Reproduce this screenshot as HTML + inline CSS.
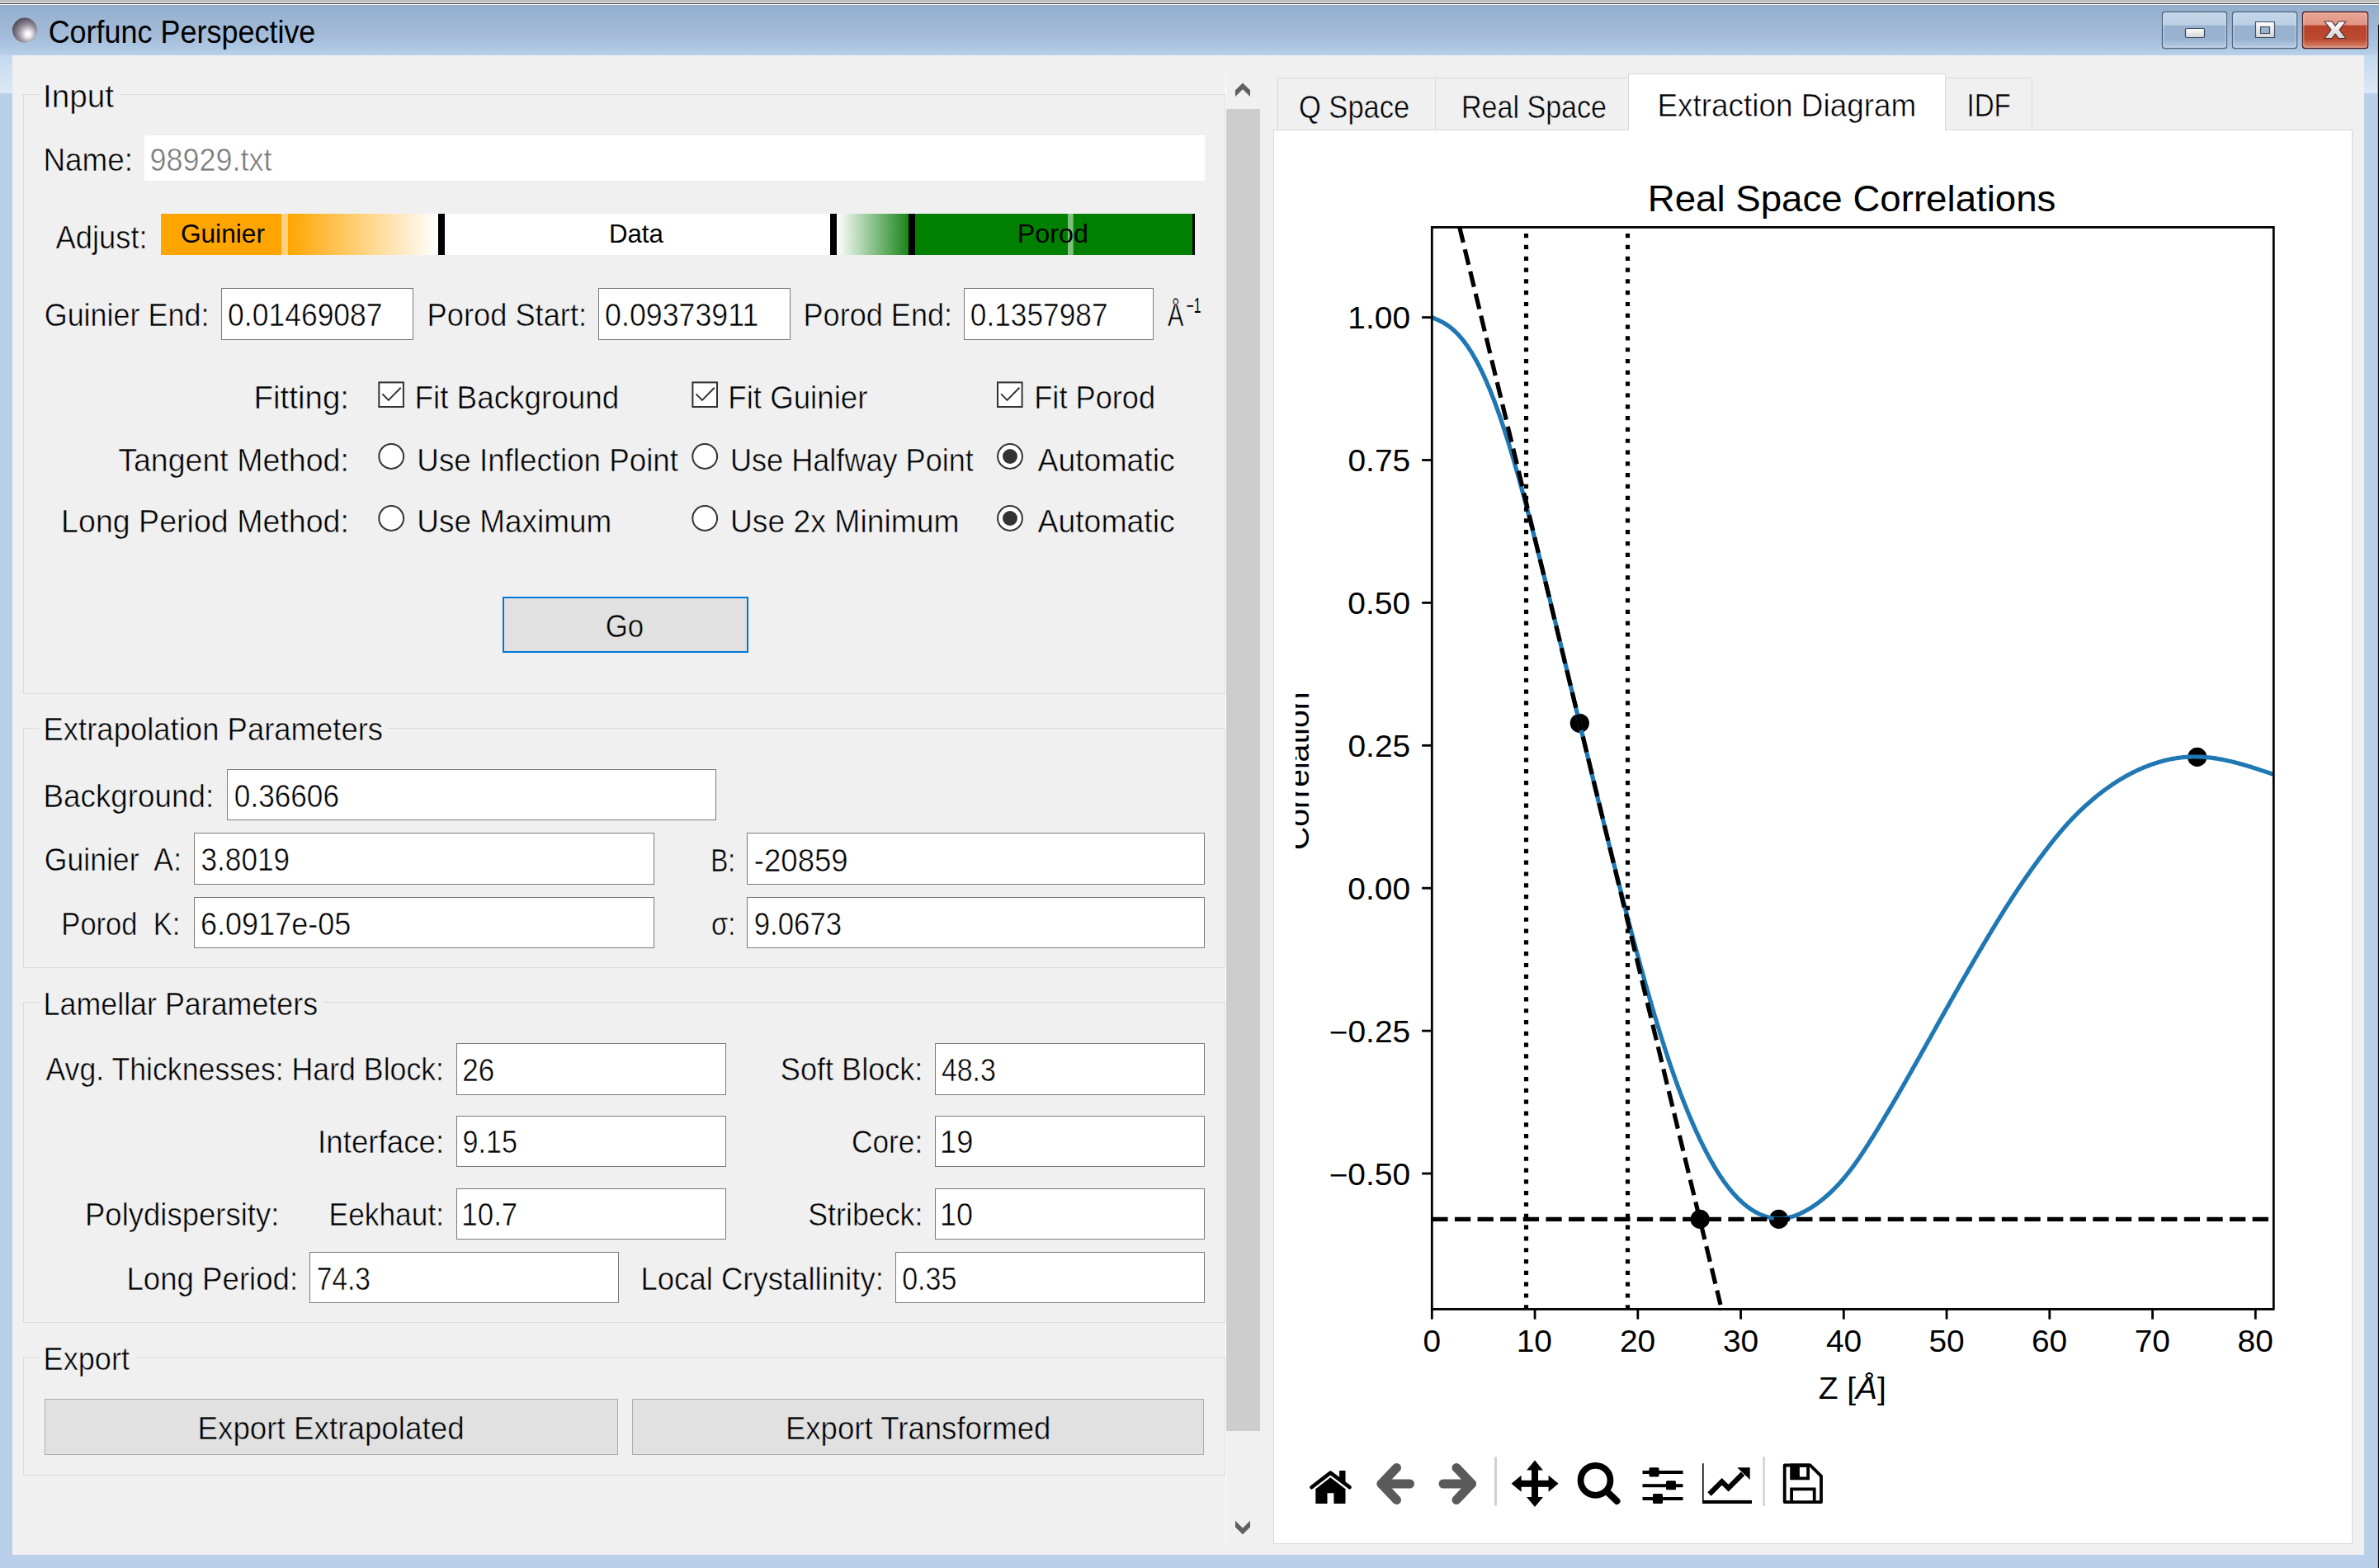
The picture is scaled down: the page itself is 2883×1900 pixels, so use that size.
<!DOCTYPE html><html><head><meta charset="utf-8"><style>html,body{margin:0;padding:0;background:#f0f0f0;}svg{display:block;}text{font-family:"Liberation Sans",sans-serif;white-space:pre;}</style></head><body><svg width="2883" height="1900" viewBox="0 0 2883 1900"><defs><linearGradient id="gTitle" x1="0" y1="0" x2="0" y2="1"><stop offset="0" stop-color="#93afce"/><stop offset="0.55" stop-color="#a2bad7"/><stop offset="0.8" stop-color="#abc4e1"/><stop offset="1" stop-color="#b9d1ea"/></linearGradient><linearGradient id="gSideTop" x1="0" y1="0" x2="0" y2="1"><stop offset="0" stop-color="#c5d9ee"/><stop offset="1" stop-color="#dce8f5"/></linearGradient><radialGradient id="gBall" cx="0.62" cy="0.64" r="0.8" fx="0.63" fy="0.66"><stop offset="0" stop-color="#ffffff"/><stop offset="0.12" stop-color="#f8f4f8"/><stop offset="0.45" stop-color="#9a94a0"/><stop offset="0.8" stop-color="#56515f"/><stop offset="1" stop-color="#423d4c"/></radialGradient><linearGradient id="gBtn" x1="0" y1="0" x2="0" y2="1"><stop offset="0" stop-color="#c3d6ea"/><stop offset="0.36" stop-color="#bcd0e6"/><stop offset="0.37" stop-color="#98b2cf"/><stop offset="0.75" stop-color="#98b2d0"/><stop offset="1" stop-color="#b9cfe6"/></linearGradient><linearGradient id="gClose" x1="0" y1="0" x2="0" y2="1"><stop offset="0" stop-color="#e9a593"/><stop offset="0.36" stop-color="#e19584"/><stop offset="0.37" stop-color="#b8412a"/><stop offset="0.75" stop-color="#bb4a2f"/><stop offset="1" stop-color="#dc8a74"/></linearGradient><linearGradient id="gGlyph" x1="0" y1="0" x2="0" y2="1"><stop offset="0" stop-color="#ffffff"/><stop offset="1" stop-color="#d4d4d4"/></linearGradient><linearGradient id="gOrange" x1="0" y1="0" x2="1" y2="0"><stop offset="0" stop-color="#ffa500"/><stop offset="1" stop-color="#ffffff"/></linearGradient><linearGradient id="gGreen" x1="0" y1="0" x2="1" y2="0"><stop offset="0" stop-color="#ffffff"/><stop offset="1" stop-color="#1a851a"/></linearGradient><clipPath id="cCanvas"><rect x="1570" y="158" width="1280" height="1712"/></clipPath></defs>
<rect x="0.00" y="0.00" width="2883.00" height="1900.00" fill="#bad0ea" />
<rect x="0.00" y="0.00" width="2883.00" height="3.00" fill="#bebebe" />
<rect x="0.00" y="3.00" width="2883.00" height="1.00" fill="#f2f2f2" />
<rect x="0.00" y="4.00" width="2883.00" height="1.00" fill="#3a3a3a" />
<rect x="0.00" y="5.00" width="2883.00" height="1.00" fill="#ffffff" />
<rect x="0.00" y="6.00" width="2883.00" height="61.00" fill="url(#gTitle)" />
<rect x="0.00" y="67.00" width="15.00" height="46.00" fill="url(#gSideTop)" />
<rect x="2865.00" y="67.00" width="17.00" height="46.00" fill="url(#gSideTop)" />
<rect x="2881.00" y="30.00" width="1.00" height="1870.00" fill="#58d0f8" />
<rect x="2882.00" y="30.00" width="1.00" height="1870.00" fill="#000000" />
<circle cx="30" cy="36.6" r="15" fill="url(#gBall)"/>
<text x="58.67" y="52.00" font-size="38" fill="#000" textLength="323.71" lengthAdjust="spacingAndGlyphs" >Corfunc Perspective</text>
<rect x="2620.5" y="14.5" width="78" height="44" rx="3" ry="3" fill="url(#gBtn)" stroke="#4f6580" stroke-width="1.3"/>
<rect x="2621.8" y="15.8" width="75.4" height="41.4" rx="2" ry="2" fill="none" stroke="#ffffff" stroke-opacity="0.45" stroke-width="1"/>
<rect x="2705.5" y="14.5" width="78" height="44" rx="3" ry="3" fill="url(#gBtn)" stroke="#4f6580" stroke-width="1.3"/>
<rect x="2706.8" y="15.8" width="75.4" height="41.4" rx="2" ry="2" fill="none" stroke="#ffffff" stroke-opacity="0.45" stroke-width="1"/>
<rect x="2790.5" y="14.5" width="79" height="44" rx="3" ry="3" fill="url(#gClose)" stroke="#4b1510" stroke-width="1.3"/>
<rect x="2791.8" y="15.8" width="76.4" height="41.4" rx="2" ry="2" fill="none" stroke="#ffffff" stroke-opacity="0.45" stroke-width="1"/>
<rect x="2648.5" y="34.5" width="23" height="11" rx="1.5" fill="url(#gGlyph)" stroke="#3a4a60" stroke-width="1.2"/>
<path d="M2733.5,26.5 h23 v19 h-23 z M2739.5,32.5 v8 h11 v-8 z" fill="url(#gGlyph)" fill-rule="evenodd" stroke="#3a4a60" stroke-width="1.2"/>
<path d="M2817,26 L2826,26 L2830,31.5 L2834,26 L2843,26 L2835,36 L2843,46.5 L2834,46.5 L2830,41 L2826,46.5 L2817,46.5 L2825,36 Z" fill="url(#gGlyph)" stroke="#4a2a2a" stroke-width="1.2" stroke-linejoin="round"/>
<rect x="15.00" y="67.00" width="2850.00" height="1817.00" fill="#f0f0f0" />
<rect x="28.00" y="114.00" width="20.00" height="1.00" fill="#dcdcdc" />
<rect x="145.00" y="114.00" width="1340.00" height="1.00" fill="#dcdcdc" />
<rect x="28.00" y="114.00" width="1.00" height="727.00" fill="#dcdcdc" />
<rect x="1484.00" y="114.00" width="1.00" height="727.00" fill="#dcdcdc" />
<rect x="28.00" y="840.00" width="1457.00" height="1.00" fill="#dcdcdc" />
<rect x="28.00" y="882.00" width="20.00" height="1.00" fill="#dcdcdc" />
<rect x="470.00" y="882.00" width="1015.00" height="1.00" fill="#dcdcdc" />
<rect x="28.00" y="882.00" width="1.00" height="291.00" fill="#dcdcdc" />
<rect x="1484.00" y="882.00" width="1.00" height="291.00" fill="#dcdcdc" />
<rect x="28.00" y="1172.00" width="1457.00" height="1.00" fill="#dcdcdc" />
<rect x="28.00" y="1214.00" width="20.00" height="1.00" fill="#dcdcdc" />
<rect x="391.00" y="1214.00" width="1094.00" height="1.00" fill="#dcdcdc" />
<rect x="28.00" y="1214.00" width="1.00" height="389.00" fill="#dcdcdc" />
<rect x="1484.00" y="1214.00" width="1.00" height="389.00" fill="#dcdcdc" />
<rect x="28.00" y="1602.00" width="1457.00" height="1.00" fill="#dcdcdc" />
<rect x="28.00" y="1644.00" width="20.00" height="1.00" fill="#dcdcdc" />
<rect x="164.00" y="1644.00" width="1321.00" height="1.00" fill="#dcdcdc" />
<rect x="28.00" y="1644.00" width="1.00" height="144.00" fill="#dcdcdc" />
<rect x="1484.00" y="1644.00" width="1.00" height="144.00" fill="#dcdcdc" />
<rect x="28.00" y="1787.00" width="1457.00" height="1.00" fill="#dcdcdc" />
<rect x="1485.00" y="89.00" width="1.00" height="1783.00" fill="#ffffff" />
<text x="51.94" y="130.40" font-size="38.5" fill="#000" textLength="86.14" lengthAdjust="spacingAndGlyphs" stroke="#f0f0f0" stroke-width="0.55" >Input</text>
<text x="52.51" y="896.70" font-size="38.5" fill="#000" textLength="411.61" lengthAdjust="spacingAndGlyphs" stroke="#f0f0f0" stroke-width="0.55" >Extrapolation Parameters</text>
<text x="52.56" y="1229.70" font-size="38.5" fill="#000" textLength="332.54" lengthAdjust="spacingAndGlyphs" stroke="#f0f0f0" stroke-width="0.55" >Lamellar Parameters</text>
<text x="52.53" y="1660.20" font-size="38.5" fill="#000" textLength="104.52" lengthAdjust="spacingAndGlyphs" stroke="#f0f0f0" stroke-width="0.55" >Export</text>
<text x="52.47" y="207.00" font-size="38.5" fill="#000" textLength="108.66" lengthAdjust="spacingAndGlyphs" stroke="#f0f0f0" stroke-width="0.55" >Name:</text>
<rect x="175.00" y="164.00" width="1285.00" height="55.00" fill="#ffffff" />
<text x="181.41" y="207.00" font-size="38.5" fill="#787878" textLength="148.05" lengthAdjust="spacingAndGlyphs" stroke="#ffffff" stroke-width="0.55" >98929.txt</text>
<text x="67.43" y="300.70" font-size="38.5" fill="#000" textLength="111.19" lengthAdjust="spacingAndGlyphs" stroke="#f0f0f0" stroke-width="0.55" >Adjust:</text>
<rect x="195.00" y="259.00" width="1253.00" height="50.00" fill="#ffffff" />
<rect x="195.00" y="259.00" width="146.00" height="50.00" fill="#ffa500" />
<rect x="341.00" y="259.00" width="8.00" height="50.00" fill="#ffd07f" />
<rect x="349.00" y="259.00" width="182.00" height="50.00" fill="url(#gOrange)" />
<rect x="531.00" y="259.00" width="8.00" height="50.00" fill="#000000" />
<rect x="1006.00" y="259.00" width="8.00" height="50.00" fill="#000000" />
<rect x="1014.00" y="259.00" width="87.00" height="50.00" fill="url(#gGreen)" />
<rect x="1101.00" y="259.00" width="8.00" height="50.00" fill="#000000" />
<rect x="1109.00" y="259.00" width="336.00" height="50.00" fill="#008000" />
<rect x="1294.00" y="259.00" width="6.70" height="50.00" fill="#80bf80" />
<rect x="1445.00" y="259.00" width="3.00" height="50.00" fill="#000000" />
<text x="218.92" y="294.00" font-size="32" fill="#000" textLength="102.01" lengthAdjust="spacingAndGlyphs" >Guinier</text>
<text x="737.94" y="294.00" font-size="32" fill="#000" textLength="65.87" lengthAdjust="spacingAndGlyphs" >Data</text>
<text x="1232.86" y="294.00" font-size="32" fill="#000" textLength="86.02" lengthAdjust="spacingAndGlyphs" >Porod</text>
<text x="53.70" y="395.00" font-size="38.5" fill="#000" textLength="199.75" lengthAdjust="spacingAndGlyphs" stroke="#f0f0f0" stroke-width="0.55" >Guinier End:</text>
<rect x="268.00" y="349.00" width="233.00" height="63.00" fill="#7a7a7a" />
<rect x="269.00" y="350.00" width="231.00" height="61.00" fill="#ffffff" />
<text x="276.12" y="395.00" font-size="38.5" fill="#000" textLength="187.47" lengthAdjust="spacingAndGlyphs" stroke="#ffffff" stroke-width="0.55" >0.01469087</text>
<text x="517.53" y="395.00" font-size="38.5" fill="#000" textLength="193.57" lengthAdjust="spacingAndGlyphs" stroke="#f0f0f0" stroke-width="0.55" >Porod Start:</text>
<rect x="725.00" y="349.00" width="233.00" height="63.00" fill="#7a7a7a" />
<rect x="726.00" y="350.00" width="231.00" height="61.00" fill="#ffffff" />
<text x="733.11" y="395.00" font-size="38.5" fill="#000" textLength="186.15" lengthAdjust="spacingAndGlyphs" stroke="#ffffff" stroke-width="0.55" >0.09373911</text>
<text x="973.54" y="395.00" font-size="38.5" fill="#000" textLength="180.52" lengthAdjust="spacingAndGlyphs" stroke="#f0f0f0" stroke-width="0.55" >Porod End:</text>
<rect x="1168.00" y="349.00" width="230.00" height="63.00" fill="#7a7a7a" />
<rect x="1169.00" y="350.00" width="228.00" height="61.00" fill="#ffffff" />
<text x="1175.82" y="395.00" font-size="38.5" fill="#000" textLength="166.74" lengthAdjust="spacingAndGlyphs" stroke="#ffffff" stroke-width="0.55" >0.1357987</text>
<text x="1414.94" y="395.00" font-size="38.5" fill="#000" textLength="19.42" lengthAdjust="spacingAndGlyphs" stroke="#f0f0f0" stroke-width="0.55" >Å</text>
<text x="1437.73" y="379.00" font-size="25" fill="#000" textLength="17.84" lengthAdjust="spacingAndGlyphs" >−1</text>
<text x="307.46" y="495.00" font-size="38.5" fill="#000" textLength="115.54" lengthAdjust="spacingAndGlyphs" stroke="#f0f0f0" stroke-width="0.55" >Fitting:</text>
<text x="143.17" y="570.80" font-size="38.5" fill="#000" textLength="279.73" lengthAdjust="spacingAndGlyphs" stroke="#f0f0f0" stroke-width="0.55" >Tangent Method:</text>
<text x="74.12" y="645.20" font-size="38.5" fill="#000" textLength="348.81" lengthAdjust="spacingAndGlyphs" stroke="#f0f0f0" stroke-width="0.55" >Long Period Method:</text>
<rect x="459.3" y="463.4" width="29.6" height="29.6" fill="#ffffff" stroke="#333333" stroke-width="2"/>
<path d="M463.40000000000003,477.4 L470.8,484.9 L485.7,469.7" fill="none" stroke="#333333" stroke-width="2"/>
<rect x="839.4" y="463.4" width="29.6" height="29.6" fill="#ffffff" stroke="#333333" stroke-width="2"/>
<path d="M843.5,477.4 L850.9,484.9 L865.8,469.7" fill="none" stroke="#333333" stroke-width="2"/>
<rect x="1209" y="463.4" width="29.6" height="29.6" fill="#ffffff" stroke="#333333" stroke-width="2"/>
<path d="M1213.1,477.4 L1220.5,484.9 L1235.4,469.7" fill="none" stroke="#333333" stroke-width="2"/>
<circle cx="474.2" cy="553" r="14.9" fill="#ffffff" stroke="#333333" stroke-width="2"/>
<circle cx="474.2" cy="628" r="14.9" fill="#ffffff" stroke="#333333" stroke-width="2"/>
<circle cx="854.2" cy="553" r="14.9" fill="#ffffff" stroke="#333333" stroke-width="2"/>
<circle cx="854.2" cy="628" r="14.9" fill="#ffffff" stroke="#333333" stroke-width="2"/>
<circle cx="1224" cy="553" r="14.9" fill="#ffffff" stroke="#333333" stroke-width="2"/>
<circle cx="1224" cy="553" r="9" fill="#333333"/>
<circle cx="1224" cy="628" r="14.9" fill="#ffffff" stroke="#333333" stroke-width="2"/>
<circle cx="1224" cy="628" r="9" fill="#333333"/>
<text x="502.48" y="495.00" font-size="38.5" fill="#000" textLength="247.70" lengthAdjust="spacingAndGlyphs" stroke="#f0f0f0" stroke-width="0.55" >Fit Background</text>
<text x="882.29" y="495.00" font-size="38.5" fill="#000" textLength="169.14" lengthAdjust="spacingAndGlyphs" stroke="#f0f0f0" stroke-width="0.55" >Fit Guinier</text>
<text x="1253.23" y="495.00" font-size="38.5" fill="#000" textLength="146.89" lengthAdjust="spacingAndGlyphs" stroke="#f0f0f0" stroke-width="0.55" >Fit Porod</text>
<text x="505.37" y="570.80" font-size="38.5" fill="#000" textLength="316.68" lengthAdjust="spacingAndGlyphs" stroke="#f0f0f0" stroke-width="0.55" >Use Inflection Point</text>
<text x="885.02" y="570.80" font-size="38.5" fill="#000" textLength="294.83" lengthAdjust="spacingAndGlyphs" stroke="#f0f0f0" stroke-width="0.55" >Use Halfway Point</text>
<text x="1257.43" y="570.80" font-size="38.5" fill="#000" textLength="166.36" lengthAdjust="spacingAndGlyphs" stroke="#f0f0f0" stroke-width="0.55" >Automatic</text>
<text x="505.36" y="645.20" font-size="38.5" fill="#000" textLength="235.87" lengthAdjust="spacingAndGlyphs" stroke="#f0f0f0" stroke-width="0.55" >Use Maximum</text>
<text x="884.93" y="645.20" font-size="38.5" fill="#000" textLength="277.63" lengthAdjust="spacingAndGlyphs" stroke="#f0f0f0" stroke-width="0.55" >Use 2x Minimum</text>
<text x="1257.43" y="645.20" font-size="38.5" fill="#000" textLength="166.36" lengthAdjust="spacingAndGlyphs" stroke="#f0f0f0" stroke-width="0.55" >Automatic</text>
<rect x="609.00" y="723.00" width="298.00" height="68.00" fill="#0078d7" />
<rect x="611.00" y="725.00" width="294.00" height="64.00" fill="#e1e1e1" />
<text x="733.76" y="771.90" font-size="38.5" fill="#000" textLength="46.51" lengthAdjust="spacingAndGlyphs" stroke="#e1e1e1" stroke-width="0.55" >Go</text>
<text x="52.48" y="978.00" font-size="38.5" fill="#000" textLength="206.66" lengthAdjust="spacingAndGlyphs" stroke="#f0f0f0" stroke-width="0.55" >Background:</text>
<rect x="275.00" y="932.00" width="593.00" height="62.00" fill="#7a7a7a" />
<rect x="276.00" y="933.00" width="591.00" height="60.00" fill="#ffffff" />
<text x="283.83" y="978.00" font-size="38.5" fill="#000" textLength="127.11" lengthAdjust="spacingAndGlyphs" stroke="#ffffff" stroke-width="0.55" >0.36606</text>
<text x="53.72" y="1055.00" font-size="38.5" fill="#000" textLength="166.32" lengthAdjust="spacingAndGlyphs" stroke="#f0f0f0" stroke-width="0.55" >Guinier  A:</text>
<rect x="235.00" y="1009.00" width="558.00" height="63.00" fill="#7a7a7a" />
<rect x="236.00" y="1010.00" width="556.00" height="61.00" fill="#ffffff" />
<text x="243.56" y="1055.00" font-size="38.5" fill="#000" textLength="107.51" lengthAdjust="spacingAndGlyphs" stroke="#ffffff" stroke-width="0.55" >3.8019</text>
<text x="861.31" y="1055.50" font-size="38.5" fill="#000" textLength="29.86" lengthAdjust="spacingAndGlyphs" stroke="#f0f0f0" stroke-width="0.55" >B:</text>
<rect x="905.00" y="1009.00" width="555.00" height="63.00" fill="#7a7a7a" />
<rect x="906.00" y="1010.00" width="553.00" height="61.00" fill="#ffffff" />
<text x="913.79" y="1055.50" font-size="38.5" fill="#000" textLength="113.92" lengthAdjust="spacingAndGlyphs" stroke="#ffffff" stroke-width="0.55" >-20859</text>
<text x="74.37" y="1132.60" font-size="38.5" fill="#000" textLength="143.97" lengthAdjust="spacingAndGlyphs" stroke="#f0f0f0" stroke-width="0.55" >Porod  K:</text>
<rect x="235.00" y="1087.00" width="558.00" height="62.00" fill="#7a7a7a" />
<rect x="236.00" y="1088.00" width="556.00" height="60.00" fill="#ffffff" />
<text x="243.06" y="1132.60" font-size="38.5" fill="#000" textLength="182.25" lengthAdjust="spacingAndGlyphs" stroke="#ffffff" stroke-width="0.55" >6.0917e-05</text>
<text x="861.92" y="1133.00" font-size="38.5" fill="#000" textLength="29.36" lengthAdjust="spacingAndGlyphs" stroke="#f0f0f0" stroke-width="0.55" >σ:</text>
<rect x="905.00" y="1087.00" width="555.00" height="62.00" fill="#7a7a7a" />
<rect x="906.00" y="1088.00" width="553.00" height="60.00" fill="#ffffff" />
<text x="913.77" y="1133.00" font-size="38.5" fill="#000" textLength="106.39" lengthAdjust="spacingAndGlyphs" stroke="#ffffff" stroke-width="0.55" >9.0673</text>
<text x="55.43" y="1309.00" font-size="38.5" fill="#000" textLength="482.60" lengthAdjust="spacingAndGlyphs" stroke="#f0f0f0" stroke-width="0.55" >Avg. Thicknesses: Hard Block:</text>
<rect x="553.00" y="1264.00" width="327.00" height="63.00" fill="#7a7a7a" />
<rect x="554.00" y="1265.00" width="325.00" height="61.00" fill="#ffffff" />
<text x="560.25" y="1309.50" font-size="38.5" fill="#000" textLength="38.90" lengthAdjust="spacingAndGlyphs" stroke="#ffffff" stroke-width="0.55" >26</text>
<text x="945.84" y="1309.00" font-size="38.5" fill="#000" textLength="172.54" lengthAdjust="spacingAndGlyphs" stroke="#f0f0f0" stroke-width="0.55" >Soft Block:</text>
<rect x="1133.00" y="1264.00" width="327.00" height="63.00" fill="#7a7a7a" />
<rect x="1134.00" y="1265.00" width="325.00" height="61.00" fill="#ffffff" />
<text x="1140.92" y="1309.50" font-size="38.5" fill="#000" textLength="65.98" lengthAdjust="spacingAndGlyphs" stroke="#ffffff" stroke-width="0.55" >48.3</text>
<text x="385.12" y="1396.50" font-size="38.5" fill="#000" textLength="153.02" lengthAdjust="spacingAndGlyphs" stroke="#f0f0f0" stroke-width="0.55" >Interface:</text>
<rect x="553.00" y="1352.00" width="327.00" height="62.00" fill="#7a7a7a" />
<rect x="554.00" y="1353.00" width="325.00" height="60.00" fill="#ffffff" />
<text x="560.39" y="1396.50" font-size="38.5" fill="#000" textLength="66.55" lengthAdjust="spacingAndGlyphs" stroke="#ffffff" stroke-width="0.55" >9.15</text>
<text x="1032.00" y="1396.50" font-size="38.5" fill="#000" textLength="86.29" lengthAdjust="spacingAndGlyphs" stroke="#f0f0f0" stroke-width="0.55" >Core:</text>
<rect x="1133.00" y="1352.00" width="327.00" height="62.00" fill="#7a7a7a" />
<rect x="1134.00" y="1353.00" width="325.00" height="60.00" fill="#ffffff" />
<text x="1138.94" y="1396.50" font-size="38.5" fill="#000" textLength="40.38" lengthAdjust="spacingAndGlyphs" stroke="#ffffff" stroke-width="0.55" >19</text>
<text x="103.01" y="1484.50" font-size="38.5" fill="#000" textLength="235.41" lengthAdjust="spacingAndGlyphs" stroke="#f0f0f0" stroke-width="0.55" >Polydispersity:</text>
<text x="398.60" y="1484.50" font-size="38.5" fill="#000" textLength="139.42" lengthAdjust="spacingAndGlyphs" stroke="#f0f0f0" stroke-width="0.55" >Eekhaut:</text>
<rect x="553.00" y="1440.00" width="327.00" height="62.00" fill="#7a7a7a" />
<rect x="554.00" y="1441.00" width="325.00" height="60.00" fill="#ffffff" />
<text x="559.35" y="1484.50" font-size="38.5" fill="#000" textLength="67.91" lengthAdjust="spacingAndGlyphs" stroke="#ffffff" stroke-width="0.55" >10.7</text>
<text x="979.26" y="1484.50" font-size="38.5" fill="#000" textLength="139.10" lengthAdjust="spacingAndGlyphs" stroke="#f0f0f0" stroke-width="0.55" >Stribeck:</text>
<rect x="1133.00" y="1440.00" width="327.00" height="62.00" fill="#7a7a7a" />
<rect x="1134.00" y="1441.00" width="325.00" height="60.00" fill="#ffffff" />
<text x="1138.96" y="1484.50" font-size="38.5" fill="#000" textLength="40.05" lengthAdjust="spacingAndGlyphs" stroke="#ffffff" stroke-width="0.55" >10</text>
<text x="153.50" y="1563.40" font-size="38.5" fill="#000" textLength="207.63" lengthAdjust="spacingAndGlyphs" stroke="#f0f0f0" stroke-width="0.55" >Long Period:</text>
<rect x="375.00" y="1517.00" width="375.00" height="62.00" fill="#7a7a7a" />
<rect x="376.00" y="1518.00" width="373.00" height="60.00" fill="#ffffff" />
<text x="383.79" y="1563.40" font-size="38.5" fill="#000" textLength="65.19" lengthAdjust="spacingAndGlyphs" stroke="#ffffff" stroke-width="0.55" >74.3</text>
<text x="776.50" y="1563.40" font-size="38.5" fill="#000" textLength="294.32" lengthAdjust="spacingAndGlyphs" stroke="#f0f0f0" stroke-width="0.55" >Local Crystallinity:</text>
<rect x="1085.00" y="1517.00" width="375.00" height="62.00" fill="#7a7a7a" />
<rect x="1086.00" y="1518.00" width="373.00" height="60.00" fill="#ffffff" />
<text x="1093.17" y="1563.40" font-size="38.5" fill="#000" textLength="66.16" lengthAdjust="spacingAndGlyphs" stroke="#ffffff" stroke-width="0.55" >0.35</text>
<rect x="54.00" y="1695.00" width="695.00" height="68.00" fill="#adadad" />
<rect x="55.00" y="1696.00" width="693.00" height="66.00" fill="#e1e1e1" />
<text x="239.48" y="1744.00" font-size="38.5" fill="#000" textLength="323.16" lengthAdjust="spacingAndGlyphs" stroke="#e1e1e1" stroke-width="0.55" >Export Extrapolated</text>
<rect x="766.00" y="1695.00" width="693.00" height="68.00" fill="#adadad" />
<rect x="767.00" y="1696.00" width="691.00" height="66.00" fill="#e1e1e1" />
<text x="951.90" y="1744.00" font-size="38.5" fill="#000" textLength="321.46" lengthAdjust="spacingAndGlyphs" stroke="#e1e1e1" stroke-width="0.55" >Export Transformed</text>
<rect x="1486.00" y="132.00" width="41.00" height="1602.00" fill="#cdcdcd" />
<path d="M1497,109.2 L1506,100.5 L1515,109.2 L1515,117 L1506,108.3 L1497,117 Z" fill="#606060"/>
<path d="M1497,1842.7 L1506,1851.4 L1515,1842.7 L1515,1850.5 L1506,1859.2 L1497,1850.5 Z" fill="#606060"/>
<rect x="1543.00" y="157.00" width="1308.00" height="1714.00" fill="#d9d9d9" />
<rect x="1544.00" y="158.00" width="1306.00" height="1712.00" fill="#ffffff" />
<rect x="1548.00" y="94.00" width="810.00" height="64.00" fill="#d9d9d9" />
<rect x="1549.00" y="95.00" width="190.00" height="62.00" fill="#f0f0f0" />
<rect x="1740.00" y="95.00" width="233.00" height="62.00" fill="#f0f0f0" />
<rect x="2358.00" y="94.00" width="105.00" height="64.00" fill="#d9d9d9" />
<rect x="2358.00" y="95.00" width="104.00" height="62.00" fill="#f0f0f0" />
<rect x="1973.00" y="89.00" width="385.00" height="69.00" fill="#d9d9d9" />
<rect x="1974.00" y="90.00" width="383.00" height="69.00" fill="#ffffff" />
<text x="1573.88" y="142.50" font-size="38.5" fill="#000" textLength="134.45" lengthAdjust="spacingAndGlyphs" stroke="#f0f0f0" stroke-width="0.55" >Q Space</text>
<text x="1770.91" y="142.50" font-size="38.5" fill="#000" textLength="176.09" lengthAdjust="spacingAndGlyphs" stroke="#f0f0f0" stroke-width="0.55" >Real Space</text>
<text x="2008.47" y="140.50" font-size="38.5" fill="#000" textLength="313.76" lengthAdjust="spacingAndGlyphs" stroke="#ffffff" stroke-width="0.55" >Extraction Diagram</text>
<text x="2383.45" y="141.40" font-size="38.5" fill="#000" textLength="53.37" lengthAdjust="spacingAndGlyphs" stroke="#f0f0f0" stroke-width="0.55" >IDF</text>
<g clip-path="url(#cCanvas)">
<text transform="translate(1585.5,1030.00) rotate(-90)" x="0" y="0" font-size="36" textLength="191.55" lengthAdjust="spacingAndGlyphs" fill="#000">Correlation</text>
</g>
<text x="1996.76" y="255.50" font-size="44" fill="#000" textLength="494.68" lengthAdjust="spacingAndGlyphs" >Real Space Correlations</text>
<circle cx="1914.3" cy="876.3" r="11.6" fill="#000"/>
<circle cx="2060.2" cy="1477.4" r="11.6" fill="#000"/>
<circle cx="2155.6" cy="1477.4" r="11.6" fill="#000"/>
<circle cx="2662.7" cy="917.4" r="11.6" fill="#000"/>
<clipPath id="cAx"><rect x="1735.3" y="275.4" width="1020.0000000000002" height="1311.0"/></clipPath>
<g clip-path="url(#cAx)">
<path d="M1735.3,384.5 L1736.4,385.0 L1737.6,385.5 L1738.7,386.0 L1739.9,386.5 L1741.0,387.0 L1742.1,387.5 L1743.3,388.0 L1744.4,388.6 L1745.6,389.1 L1746.7,389.7 L1747.8,390.3 L1749.0,390.9 L1750.1,391.6 L1751.3,392.3 L1752.4,393.0 L1753.5,393.7 L1754.7,394.5 L1755.8,395.3 L1757.0,396.2 L1758.1,397.1 L1759.2,398.0 L1760.4,399.0 L1761.5,399.9 L1762.7,401.0 L1763.8,402.1 L1764.9,403.2 L1766.1,404.3 L1767.2,405.5 L1768.4,406.8 L1769.5,408.1 L1770.6,409.4 L1771.8,410.8 L1772.9,412.2 L1774.1,413.6 L1775.2,415.1 L1776.3,416.7 L1777.5,418.3 L1778.6,419.9 L1779.8,421.6 L1780.9,423.3 L1782.0,425.1 L1783.2,426.9 L1784.3,428.8 L1785.5,430.7 L1786.6,432.7 L1787.7,434.7 L1788.9,436.7 L1790.0,438.8 L1791.2,441.0 L1792.3,443.2 L1793.4,445.4 L1794.6,447.7 L1795.7,450.1 L1796.9,452.5 L1798.0,454.9 L1799.1,457.4 L1800.3,460.0 L1801.4,462.6 L1802.5,465.2 L1803.7,467.9 L1804.8,470.6 L1806.0,473.4 L1807.1,476.2 L1808.2,479.1 L1809.4,482.1 L1810.5,485.0 L1811.7,488.1 L1812.8,491.1 L1813.9,494.3 L1815.1,497.4 L1816.2,500.6 L1817.4,503.9 L1818.5,507.2 L1819.6,510.6 L1820.8,514.0 L1821.9,517.4 L1823.1,520.9 L1824.2,524.4 L1825.3,528.0 L1826.5,531.6 L1827.6,535.3 L1828.8,539.0 L1829.9,542.7 L1831.0,546.5 L1832.2,550.3 L1833.3,554.1 L1834.5,558.0 L1835.6,562.0 L1836.7,565.9 L1837.9,569.9 L1839.0,573.9 L1840.2,578.0 L1841.3,582.1 L1842.4,586.2 L1843.6,590.3 L1844.7,594.5 L1845.9,598.7 L1847.0,603.0 L1848.1,607.2 L1849.3,611.5 L1850.4,615.8 L1851.6,620.2 L1852.7,624.5 L1853.8,628.9 L1855.0,633.3 L1856.1,637.7 L1857.3,642.2 L1858.4,646.6 L1859.5,651.1 L1860.7,655.6 L1861.8,660.2 L1863.0,664.7 L1864.1,669.2 L1865.2,673.8 L1866.4,678.4 L1867.5,683.0 L1868.7,687.6 L1869.8,692.2 L1870.9,696.8 L1872.1,701.5 L1873.2,706.1 L1874.4,710.8 L1875.5,715.4 L1876.6,720.1 L1877.8,724.8 L1878.9,729.5 L1880.1,734.2 L1881.2,738.9 L1882.3,743.6 L1883.5,748.3 L1884.6,753.0 L1885.8,757.7 L1886.9,762.4 L1888.0,767.2 L1889.2,771.9 L1890.3,776.6 L1891.5,781.4 L1892.6,786.1 L1893.7,790.9 L1894.9,795.6 L1896.0,800.4 L1897.2,805.1 L1898.3,809.9 L1899.4,814.6 L1900.6,819.3 L1901.7,824.1 L1902.9,828.8 L1904.0,833.6 L1905.1,838.3 L1906.3,843.1 L1907.4,847.8 L1908.6,852.6 L1909.7,857.3 L1910.8,862.1 L1912.0,866.8 L1913.1,871.5 L1914.3,876.3 L1915.4,881.0 L1916.5,885.8 L1917.7,890.5 L1918.8,895.2 L1920.0,900.0 L1921.1,904.7 L1922.2,909.4 L1923.4,914.1 L1924.5,918.9 L1925.7,923.6 L1926.8,928.3 L1927.9,933.0 L1929.1,937.7 L1930.2,942.4 L1931.3,947.1 L1932.5,951.8 L1933.6,956.5 L1934.8,961.2 L1935.9,965.9 L1937.0,970.6 L1938.2,975.3 L1939.3,979.9 L1940.5,984.6 L1941.6,989.3 L1942.7,993.9 L1943.9,998.6 L1945.0,1003.2 L1946.2,1007.8 L1947.3,1012.5 L1948.4,1017.1 L1949.6,1021.7 L1950.7,1026.3 L1951.9,1030.9 L1953.0,1035.5 L1954.1,1040.0 L1955.3,1044.6 L1956.4,1049.2 L1957.6,1053.7 L1958.7,1058.3 L1959.8,1062.8 L1961.0,1067.3 L1962.1,1071.8 L1963.3,1076.3 L1964.4,1080.8 L1965.5,1085.2 L1966.7,1089.7 L1967.8,1094.1 L1969.0,1098.5 L1970.1,1102.9 L1971.2,1107.3 L1972.4,1111.7 L1973.5,1116.1 L1974.7,1120.4 L1975.8,1124.8 L1976.9,1129.1 L1978.1,1133.4 L1979.2,1137.7 L1980.4,1142.0 L1981.5,1146.2 L1982.6,1150.5 L1983.8,1154.7 L1984.9,1158.9 L1986.1,1163.1 L1987.2,1167.2 L1988.3,1171.4 L1989.5,1175.5 L1990.6,1179.6 L1991.8,1183.7 L1992.9,1187.8 L1994.0,1191.9 L1995.2,1195.9 L1996.3,1199.9 L1997.5,1203.9 L1998.6,1207.9 L1999.7,1211.8 L2000.9,1215.8 L2002.0,1219.7 L2003.2,1223.5 L2004.3,1227.4 L2005.4,1231.2 L2006.6,1235.0 L2007.7,1238.8 L2008.9,1242.6 L2010.0,1246.3 L2011.1,1250.0 L2012.3,1253.7 L2013.4,1257.3 L2014.6,1261.0 L2015.7,1264.5 L2016.8,1268.1 L2018.0,1271.7 L2019.1,1275.2 L2020.3,1278.6 L2021.4,1282.1 L2022.5,1285.5 L2023.7,1288.9 L2024.8,1292.2 L2026.0,1295.6 L2027.1,1298.9 L2028.2,1302.1 L2029.4,1305.4 L2030.5,1308.6 L2031.7,1311.7 L2032.8,1314.9 L2033.9,1318.0 L2035.1,1321.0 L2036.2,1324.1 L2037.4,1327.1 L2038.5,1330.1 L2039.6,1333.0 L2040.8,1335.9 L2041.9,1338.8 L2043.1,1341.6 L2044.2,1344.4 L2045.3,1347.2 L2046.5,1350.0 L2047.6,1352.7 L2048.8,1355.4 L2049.9,1358.1 L2051.0,1360.7 L2052.2,1363.3 L2053.3,1365.9 L2054.5,1368.4 L2055.6,1370.9 L2056.7,1373.4 L2057.9,1375.9 L2059.0,1378.3 L2060.1,1380.7 L2061.3,1383.0 L2062.4,1385.4 L2063.6,1387.7 L2064.7,1390.0 L2065.8,1392.2 L2067.0,1394.5 L2068.1,1396.6 L2069.3,1398.8 L2070.4,1400.9 L2071.5,1403.0 L2072.7,1405.1 L2073.8,1407.2 L2075.0,1409.2 L2076.1,1411.1 L2077.2,1413.1 L2078.4,1415.0 L2079.5,1416.9 L2080.7,1418.8 L2081.8,1420.6 L2082.9,1422.4 L2084.1,1424.1 L2085.2,1425.9 L2086.4,1427.6 L2087.5,1429.2 L2088.6,1430.9 L2089.8,1432.5 L2090.9,1434.0 L2092.1,1435.6 L2093.2,1437.1 L2094.3,1438.5 L2095.5,1440.0 L2096.6,1441.4 L2097.8,1442.8 L2098.9,1444.1 L2100.0,1445.5 L2101.2,1446.7 L2102.3,1448.0 L2103.5,1449.2 L2104.6,1450.5 L2105.7,1451.6 L2106.9,1452.8 L2108.0,1453.9 L2109.2,1455.0 L2110.3,1456.0 L2111.4,1457.1 L2112.6,1458.1 L2113.7,1459.1 L2114.9,1460.0 L2116.0,1460.9 L2117.1,1461.8 L2118.3,1462.7 L2119.4,1463.5 L2120.6,1464.3 L2121.7,1465.1 L2122.8,1465.9 L2124.0,1466.6 L2125.1,1467.3 L2126.3,1468.0 L2127.4,1468.6 L2128.5,1469.2 L2129.7,1469.8 L2130.8,1470.4 L2132.0,1471.0 L2133.1,1471.5 L2134.2,1472.0 L2135.4,1472.4 L2136.5,1472.9 L2137.7,1473.3 L2138.8,1473.7 L2139.9,1474.1 L2141.1,1474.4 L2142.2,1474.8 L2143.4,1475.1 L2144.5,1475.3 L2145.6,1475.6 L2146.8,1475.8 L2147.9,1476.0 L2149.1,1476.2 L2150.2,1476.4 L2151.3,1476.5 L2152.5,1476.6 L2153.6,1476.7 L2154.8,1476.7 L2155.9,1476.7 L2157.0,1476.7 L2158.2,1476.7 L2159.3,1476.6 L2160.5,1476.5 L2161.6,1476.4 L2162.7,1476.3 L2163.9,1476.1 L2165.0,1475.9 L2166.2,1475.7 L2167.3,1475.4 L2168.4,1475.2 L2169.6,1474.9 L2170.7,1474.6 L2171.9,1474.2 L2173.0,1473.9 L2174.1,1473.5 L2175.3,1473.1 L2176.4,1472.7 L2177.6,1472.2 L2178.7,1471.8 L2179.8,1471.3 L2181.0,1470.8 L2182.1,1470.3 L2183.3,1469.7 L2184.4,1469.2 L2185.5,1468.6 L2186.7,1468.0 L2187.8,1467.4 L2188.9,1466.8 L2190.1,1466.1 L2191.2,1465.5 L2192.4,1464.8 L2193.5,1464.1 L2194.6,1463.4 L2195.8,1462.7 L2196.9,1461.9 L2198.1,1461.2 L2199.2,1460.4 L2200.3,1459.6 L2201.5,1458.8 L2202.6,1458.0 L2203.8,1457.1 L2204.9,1456.3 L2206.0,1455.4 L2207.2,1454.5 L2208.3,1453.6 L2209.5,1452.7 L2210.6,1451.7 L2211.7,1450.8 L2212.9,1449.8 L2214.0,1448.8 L2215.2,1447.8 L2216.3,1446.8 L2217.4,1445.7 L2218.6,1444.7 L2219.7,1443.6 L2220.9,1442.5 L2222.0,1441.3 L2223.1,1440.2 L2224.3,1439.0 L2225.4,1437.9 L2226.6,1436.7 L2227.7,1435.4 L2228.8,1434.2 L2230.0,1432.9 L2231.1,1431.7 L2232.3,1430.3 L2233.4,1429.0 L2234.5,1427.7 L2235.7,1426.3 L2236.8,1424.9 L2238.0,1423.5 L2239.1,1422.1 L2240.2,1420.7 L2241.4,1419.2 L2242.5,1417.7 L2243.7,1416.2 L2244.8,1414.7 L2245.9,1413.1 L2247.1,1411.6 L2248.2,1410.0 L2249.4,1408.4 L2250.5,1406.8 L2251.6,1405.1 L2252.8,1403.5 L2253.9,1401.8 L2255.1,1400.1 L2256.2,1398.4 L2257.3,1396.7 L2258.5,1395.0 L2259.6,1393.2 L2260.8,1391.5 L2261.9,1389.7 L2263.0,1387.9 L2264.2,1386.1 L2265.3,1384.3 L2266.5,1382.5 L2267.6,1380.7 L2268.7,1378.9 L2269.9,1377.1 L2271.0,1375.2 L2272.2,1373.4 L2273.3,1371.5 L2274.4,1369.7 L2275.6,1367.8 L2276.7,1365.9 L2277.9,1364.0 L2279.0,1362.2 L2280.1,1360.3 L2281.3,1358.4 L2282.4,1356.5 L2283.6,1354.6 L2284.7,1352.6 L2285.8,1350.7 L2287.0,1348.8 L2288.1,1346.9 L2289.3,1345.0 L2290.4,1343.0 L2291.5,1341.1 L2292.7,1339.1 L2293.8,1337.2 L2295.0,1335.2 L2296.1,1333.3 L2297.2,1331.3 L2298.4,1329.4 L2299.5,1327.4 L2300.7,1325.4 L2301.8,1323.5 L2302.9,1321.5 L2304.1,1319.5 L2305.2,1317.5 L2306.4,1315.5 L2307.5,1313.5 L2308.6,1311.5 L2309.8,1309.5 L2310.9,1307.5 L2312.0,1305.5 L2313.2,1303.5 L2314.3,1301.5 L2315.5,1299.5 L2316.6,1297.5 L2317.7,1295.5 L2318.9,1293.4 L2320.0,1291.4 L2321.2,1289.4 L2322.3,1287.4 L2323.4,1285.3 L2324.6,1283.3 L2325.7,1281.3 L2326.9,1279.3 L2328.0,1277.2 L2329.1,1275.2 L2330.3,1273.2 L2331.4,1271.1 L2332.6,1269.1 L2333.7,1267.1 L2334.8,1265.0 L2336.0,1263.0 L2337.1,1260.9 L2338.3,1258.9 L2339.4,1256.9 L2340.5,1254.8 L2341.7,1252.8 L2342.8,1250.8 L2344.0,1248.7 L2345.1,1246.7 L2346.2,1244.7 L2347.4,1242.6 L2348.5,1240.6 L2349.7,1238.5 L2350.8,1236.5 L2351.9,1234.5 L2353.1,1232.5 L2354.2,1230.4 L2355.4,1228.4 L2356.5,1226.4 L2357.6,1224.3 L2358.8,1222.3 L2359.9,1220.3 L2361.1,1218.3 L2362.2,1216.3 L2363.3,1214.2 L2364.5,1212.2 L2365.6,1210.2 L2366.8,1208.2 L2367.9,1206.2 L2369.0,1204.2 L2370.2,1202.2 L2371.3,1200.2 L2372.5,1198.2 L2373.6,1196.2 L2374.7,1194.2 L2375.9,1192.2 L2377.0,1190.2 L2378.2,1188.2 L2379.3,1186.2 L2380.4,1184.2 L2381.6,1182.3 L2382.7,1180.3 L2383.9,1178.3 L2385.0,1176.3 L2386.1,1174.4 L2387.3,1172.4 L2388.4,1170.4 L2389.6,1168.5 L2390.7,1166.5 L2391.8,1164.5 L2393.0,1162.6 L2394.1,1160.6 L2395.3,1158.7 L2396.4,1156.7 L2397.5,1154.8 L2398.7,1152.8 L2399.8,1150.9 L2401.0,1149.0 L2402.1,1147.0 L2403.2,1145.1 L2404.4,1143.2 L2405.5,1141.3 L2406.7,1139.3 L2407.8,1137.4 L2408.9,1135.5 L2410.1,1133.6 L2411.2,1131.7 L2412.4,1129.8 L2413.5,1127.9 L2414.6,1126.0 L2415.8,1124.2 L2416.9,1122.3 L2418.1,1120.4 L2419.2,1118.5 L2420.3,1116.7 L2421.5,1114.8 L2422.6,1113.0 L2423.8,1111.1 L2424.9,1109.3 L2426.0,1107.5 L2427.2,1105.7 L2428.3,1103.8 L2429.5,1102.0 L2430.6,1100.2 L2431.7,1098.4 L2432.9,1096.6 L2434.0,1094.9 L2435.2,1093.1 L2436.3,1091.3 L2437.4,1089.6 L2438.6,1087.8 L2439.7,1086.1 L2440.8,1084.3 L2442.0,1082.6 L2443.1,1080.9 L2444.3,1079.1 L2445.4,1077.4 L2446.5,1075.7 L2447.7,1074.0 L2448.8,1072.4 L2450.0,1070.7 L2451.1,1069.0 L2452.2,1067.3 L2453.4,1065.7 L2454.5,1064.0 L2455.7,1062.4 L2456.8,1060.8 L2457.9,1059.2 L2459.1,1057.5 L2460.2,1055.9 L2461.4,1054.3 L2462.5,1052.7 L2463.6,1051.1 L2464.8,1049.6 L2465.9,1048.0 L2467.1,1046.4 L2468.2,1044.9 L2469.3,1043.3 L2470.5,1041.8 L2471.6,1040.2 L2472.8,1038.7 L2473.9,1037.2 L2475.0,1035.7 L2476.2,1034.1 L2477.3,1032.6 L2478.5,1031.1 L2479.6,1029.7 L2480.7,1028.2 L2481.9,1026.7 L2483.0,1025.2 L2484.2,1023.8 L2485.3,1022.3 L2486.4,1020.9 L2487.6,1019.4 L2488.7,1018.0 L2489.9,1016.6 L2491.0,1015.2 L2492.1,1013.8 L2493.3,1012.4 L2494.4,1011.0 L2495.6,1009.6 L2496.7,1008.3 L2497.8,1006.9 L2499.0,1005.6 L2500.1,1004.3 L2501.3,1003.0 L2502.4,1001.7 L2503.5,1000.4 L2504.7,999.1 L2505.8,997.8 L2507.0,996.6 L2508.1,995.4 L2509.2,994.1 L2510.4,992.9 L2511.5,991.7 L2512.7,990.5 L2513.8,989.4 L2514.9,988.2 L2516.1,987.1 L2517.2,985.9 L2518.4,984.8 L2519.5,983.7 L2520.6,982.6 L2521.8,981.5 L2522.9,980.4 L2524.1,979.4 L2525.2,978.3 L2526.3,977.3 L2527.5,976.2 L2528.6,975.2 L2529.8,974.2 L2530.9,973.2 L2532.0,972.2 L2533.2,971.2 L2534.3,970.2 L2535.5,969.2 L2536.6,968.3 L2537.7,967.3 L2538.9,966.4 L2540.0,965.4 L2541.2,964.5 L2542.3,963.6 L2543.4,962.7 L2544.6,961.8 L2545.7,960.9 L2546.9,960.0 L2548.0,959.2 L2549.1,958.3 L2550.3,957.5 L2551.4,956.6 L2552.6,955.8 L2553.7,955.0 L2554.8,954.2 L2556.0,953.4 L2557.1,952.6 L2558.3,951.8 L2559.4,951.0 L2560.5,950.2 L2561.7,949.5 L2562.8,948.7 L2564.0,948.0 L2565.1,947.2 L2566.2,946.5 L2567.4,945.8 L2568.5,945.1 L2569.6,944.4 L2570.8,943.7 L2571.9,943.1 L2573.1,942.4 L2574.2,941.7 L2575.3,941.1 L2576.5,940.4 L2577.6,939.8 L2578.8,939.2 L2579.9,938.6 L2581.0,938.0 L2582.2,937.4 L2583.3,936.8 L2584.5,936.2 L2585.6,935.6 L2586.7,935.1 L2587.9,934.5 L2589.0,934.0 L2590.2,933.4 L2591.3,932.9 L2592.4,932.4 L2593.6,931.9 L2594.7,931.4 L2595.9,930.9 L2597.0,930.4 L2598.1,929.9 L2599.3,929.5 L2600.4,929.0 L2601.6,928.6 L2602.7,928.1 L2603.8,927.7 L2605.0,927.3 L2606.1,926.8 L2607.3,926.4 L2608.4,926.0 L2609.5,925.6 L2610.7,925.3 L2611.8,924.9 L2613.0,924.5 L2614.1,924.2 L2615.2,923.8 L2616.4,923.5 L2617.5,923.1 L2618.7,922.8 L2619.8,922.5 L2620.9,922.2 L2622.1,921.9 L2623.2,921.6 L2624.4,921.3 L2625.5,921.0 L2626.6,920.8 L2627.8,920.5 L2628.9,920.3 L2630.1,920.0 L2631.2,919.8 L2632.3,919.6 L2633.5,919.4 L2634.6,919.2 L2635.8,919.0 L2636.9,918.8 L2638.0,918.6 L2639.2,918.4 L2640.3,918.3 L2641.5,918.1 L2642.6,918.0 L2643.7,917.9 L2644.9,917.7 L2646.0,917.6 L2647.2,917.5 L2648.3,917.4 L2649.4,917.4 L2650.6,917.3 L2651.7,917.2 L2652.9,917.2 L2654.0,917.1 L2655.1,917.1 L2656.3,917.0 L2657.4,917.0 L2658.6,917.0 L2659.7,917.0 L2660.8,917.0 L2662.0,917.0 L2663.1,917.0 L2664.3,917.0 L2665.4,917.1 L2666.5,917.1 L2667.7,917.2 L2668.8,917.2 L2670.0,917.3 L2671.1,917.4 L2672.2,917.5 L2673.4,917.6 L2674.5,917.7 L2675.7,917.8 L2676.8,917.9 L2677.9,918.0 L2679.1,918.1 L2680.2,918.3 L2681.4,918.4 L2682.5,918.6 L2683.6,918.8 L2684.8,918.9 L2685.9,919.1 L2687.1,919.3 L2688.2,919.5 L2689.3,919.7 L2690.5,919.9 L2691.6,920.1 L2692.8,920.3 L2693.9,920.5 L2695.0,920.8 L2696.2,921.0 L2697.3,921.2 L2698.4,921.5 L2699.6,921.7 L2700.7,922.0 L2701.9,922.2 L2703.0,922.5 L2704.1,922.8 L2705.3,923.0 L2706.4,923.3 L2707.6,923.6 L2708.7,923.9 L2709.8,924.2 L2711.0,924.5 L2712.1,924.8 L2713.3,925.1 L2714.4,925.4 L2715.5,925.7 L2716.7,926.0 L2717.8,926.4 L2719.0,926.7 L2720.1,927.0 L2721.2,927.4 L2722.4,927.7 L2723.5,928.0 L2724.7,928.4 L2725.8,928.7 L2726.9,929.1 L2728.1,929.4 L2729.2,929.8 L2730.4,930.2 L2731.5,930.5 L2732.6,930.9 L2733.8,931.2 L2734.9,931.6 L2736.1,932.0 L2737.2,932.4 L2738.3,932.7 L2739.5,933.1 L2740.6,933.5 L2741.8,933.9 L2742.9,934.2 L2744.0,934.6 L2745.2,935.0 L2746.3,935.4 L2747.5,935.8 L2748.6,936.1 L2749.7,936.5 L2750.9,936.9 L2752.0,937.3 L2753.2,937.7 L2754.3,938.0 L2755.4,938.4 L2756.6,938.8 L2757.7,939.2 L2758.9,939.6 L2760.0,940.0" fill="none" stroke="#1f77b4" stroke-width="5.21" stroke-linejoin="round"/>
<line x1="1849.5" y1="1586.4" x2="1849.5" y2="281.5" stroke="#000" stroke-width="5.21" stroke-dasharray="5.21 8.60"/>
<line x1="1972.5" y1="1586.4" x2="1972.5" y2="281.5" stroke="#000" stroke-width="5.21" stroke-dasharray="5.21 8.60"/>
<line x1="1750.5" y1="200" x2="2085.0" y2="1581" stroke="#000" stroke-width="5.21" stroke-dasharray="19.28 8.34" stroke-dashoffset="5.45"/>
<line x1="1735.3" y1="1477.4" x2="2755.3" y2="1477.4" stroke="#000" stroke-width="5.21" stroke-dasharray="19.28 8.34"/>
</g>
<rect x="1735.3" y="275.4" width="1020.0000000000002" height="1311.0" fill="none" stroke="#000" stroke-width="2.8"/>
<line x1="1723.1" y1="384.60" x2="1735.3" y2="384.60" stroke="#000" stroke-width="2.8"/>
<text x="1633.36" y="398.40" font-size="36" fill="#000" textLength="75.67" lengthAdjust="spacingAndGlyphs" >1.00</text>
<line x1="1723.1" y1="557.50" x2="1735.3" y2="557.50" stroke="#000" stroke-width="2.8"/>
<text x="1633.47" y="571.30" font-size="36" fill="#000" textLength="75.67" lengthAdjust="spacingAndGlyphs" >0.75</text>
<line x1="1723.1" y1="730.40" x2="1735.3" y2="730.40" stroke="#000" stroke-width="2.8"/>
<text x="1633.36" y="744.20" font-size="36" fill="#000" textLength="75.67" lengthAdjust="spacingAndGlyphs" >0.50</text>
<line x1="1723.1" y1="903.30" x2="1735.3" y2="903.30" stroke="#000" stroke-width="2.8"/>
<text x="1633.47" y="917.10" font-size="36" fill="#000" textLength="75.67" lengthAdjust="spacingAndGlyphs" >0.25</text>
<line x1="1723.1" y1="1076.20" x2="1735.3" y2="1076.20" stroke="#000" stroke-width="2.8"/>
<text x="1633.36" y="1090.00" font-size="36" fill="#000" textLength="75.67" lengthAdjust="spacingAndGlyphs" >0.00</text>
<line x1="1723.1" y1="1249.10" x2="1735.3" y2="1249.10" stroke="#000" stroke-width="2.8"/>
<text x="1610.77" y="1262.90" font-size="36" fill="#000" textLength="98.38" lengthAdjust="spacingAndGlyphs" >−0.25</text>
<line x1="1723.1" y1="1422.00" x2="1735.3" y2="1422.00" stroke="#000" stroke-width="2.8"/>
<text x="1610.65" y="1435.80" font-size="36" fill="#000" textLength="98.38" lengthAdjust="spacingAndGlyphs" >−0.50</text>
<line x1="1735.30" y1="1586.4" x2="1735.30" y2="1598.6" stroke="#000" stroke-width="2.8"/>
<text x="1724.49" y="1638.00" font-size="36" fill="#000" textLength="21.62" lengthAdjust="spacingAndGlyphs" >0</text>
<line x1="1860.05" y1="1586.4" x2="1860.05" y2="1598.6" stroke="#000" stroke-width="2.8"/>
<text x="1837.71" y="1638.00" font-size="36" fill="#000" textLength="43.25" lengthAdjust="spacingAndGlyphs" >10</text>
<line x1="1984.80" y1="1586.4" x2="1984.80" y2="1598.6" stroke="#000" stroke-width="2.8"/>
<text x="1962.97" y="1638.00" font-size="36" fill="#000" textLength="43.25" lengthAdjust="spacingAndGlyphs" >20</text>
<line x1="2109.55" y1="1586.4" x2="2109.55" y2="1598.6" stroke="#000" stroke-width="2.8"/>
<text x="2087.95" y="1638.00" font-size="36" fill="#000" textLength="43.25" lengthAdjust="spacingAndGlyphs" >30</text>
<line x1="2234.30" y1="1586.4" x2="2234.30" y2="1598.6" stroke="#000" stroke-width="2.8"/>
<text x="2212.99" y="1638.00" font-size="36" fill="#000" textLength="43.25" lengthAdjust="spacingAndGlyphs" >40</text>
<line x1="2359.05" y1="1586.4" x2="2359.05" y2="1598.6" stroke="#000" stroke-width="2.8"/>
<text x="2337.41" y="1638.00" font-size="36" fill="#000" textLength="43.25" lengthAdjust="spacingAndGlyphs" >50</text>
<line x1="2483.80" y1="1586.4" x2="2483.80" y2="1598.6" stroke="#000" stroke-width="2.8"/>
<text x="2461.95" y="1638.00" font-size="36" fill="#000" textLength="43.25" lengthAdjust="spacingAndGlyphs" >60</text>
<line x1="2608.55" y1="1586.4" x2="2608.55" y2="1598.6" stroke="#000" stroke-width="2.8"/>
<text x="2586.70" y="1638.00" font-size="36" fill="#000" textLength="43.25" lengthAdjust="spacingAndGlyphs" >70</text>
<line x1="2733.30" y1="1586.4" x2="2733.30" y2="1598.6" stroke="#000" stroke-width="2.8"/>
<text x="2711.60" y="1638.00" font-size="36" fill="#000" textLength="43.25" lengthAdjust="spacingAndGlyphs" >80</text>
<text x="2203.76" y="1695.00" font-size="36" fill="#000" textLength="45.35" lengthAdjust="spacingAndGlyphs" >Z [</text>
<text x="2249.1" y="1695" font-size="36" font-style="italic" textLength="25.9" lengthAdjust="spacingAndGlyphs">Å</text>
<text x="2275.0" y="1695" font-size="36" textLength="10.8" lengthAdjust="spacingAndGlyphs">]</text>
<g transform="translate(1580,1760)"><path d="M14.3,44.3 L32.3,30.3 L50.5,44.3 L50.5,62 L36.4,62 L36.4,49.3 L28.5,49.3 L28.5,62 L14.3,62 Z" fill="#000"/><rect x="43.1" y="22" width="7.4" height="14" fill="#000"/><path d="M9.4,42.2 L32.3,24.6 L55.6,42.2" fill="none" stroke="#000" stroke-width="4.6" stroke-linecap="round" stroke-linejoin="round"/></g>
<g transform="translate(1580,1760)"><path d="M94,38 L128.5,38" stroke="#5a5a5a" stroke-width="11" stroke-linecap="round"/><path d="M112.5,18.5 L94,38 L112.5,57.5" fill="none" stroke="#5a5a5a" stroke-width="11" stroke-linecap="round" stroke-linejoin="round"/></g>
<g transform="translate(1580,1760)"><path d="M169,38 L203.5,38" stroke="#5a5a5a" stroke-width="11" stroke-linecap="round"/><path d="M185,18.5 L203.5,38 L185,57.5" fill="none" stroke="#5a5a5a" stroke-width="11" stroke-linecap="round" stroke-linejoin="round"/></g>
<rect x="1811.00" y="1765.50" width="3.00" height="59.00" fill="#d0d0d0" />
<rect x="2136.30" y="1765.00" width="2.50" height="59.70" fill="#d0d0d0" />
<g transform="translate(1820,1760)"><rect x="36" y="18" width="8" height="40" fill="#000"/><rect x="20" y="33.8" width="40" height="8" fill="#000"/><path d="M40,9.6 L50,21.6 L30,21.6 Z M40,66 L50,54 L30,54 Z M11.6,37.8 L23.6,27.8 L23.6,47.8 Z M68.6,37.8 L56.6,27.8 L56.6,47.8 Z" fill="#000"/></g>
<g transform="translate(1820,1760)"><circle cx="113.5" cy="33.8" r="18" fill="none" stroke="#000" stroke-width="7.8"/><path d="M127,47 L139.5,59" stroke="#000" stroke-width="8" stroke-linecap="round"/></g>
<g transform="translate(1820,1760)"><rect x="170.5" y="22" width="49" height="4" fill="#000"/><rect x="170.5" y="38.2" width="49" height="4" fill="#000"/><rect x="170.5" y="54" width="49" height="4" fill="#000"/><rect x="178.5" y="18.2" width="12" height="11.4" rx="1.5" fill="#000"/><rect x="199" y="34.2" width="12" height="11" rx="1.5" fill="#000"/><rect x="183" y="50" width="12" height="12" rx="1.5" fill="#000"/></g>
<g transform="translate(2050,1760)"><rect x="13" y="13.2" width="1.6" height="48.8" fill="#000"/><rect x="13" y="57.9" width="60" height="4.1" fill="#000"/><path d="M21.5,50.5 L36.7,35.3 L44.6,43.2 L62,25.8" fill="none" stroke="#000" stroke-width="6.2" stroke-linejoin="miter"/><path d="M55.2,18.2 L70.7,18.2 L70.7,32.9 Z" fill="#000"/></g>
<g transform="translate(2050,1760)"><path d="M112.7,15.5 L143.8,15.5 L157,28.7 L157,60.1 L112.7,60.1 Z" fill="none" stroke="#000" stroke-width="3.8" stroke-linejoin="round"/><path d="M119.2,13.6 L143,13.6 L143,33.3 L119.2,33.3 Z M130.9,17.8 L130.9,29.5 L139.2,29.5 L139.2,17.8 Z" fill="#000" fill-rule="evenodd"/><path d="M121.1,60.1 V44.3 H148.7 V60.1" fill="none" stroke="#000" stroke-width="3.8"/></g></svg></body></html>
